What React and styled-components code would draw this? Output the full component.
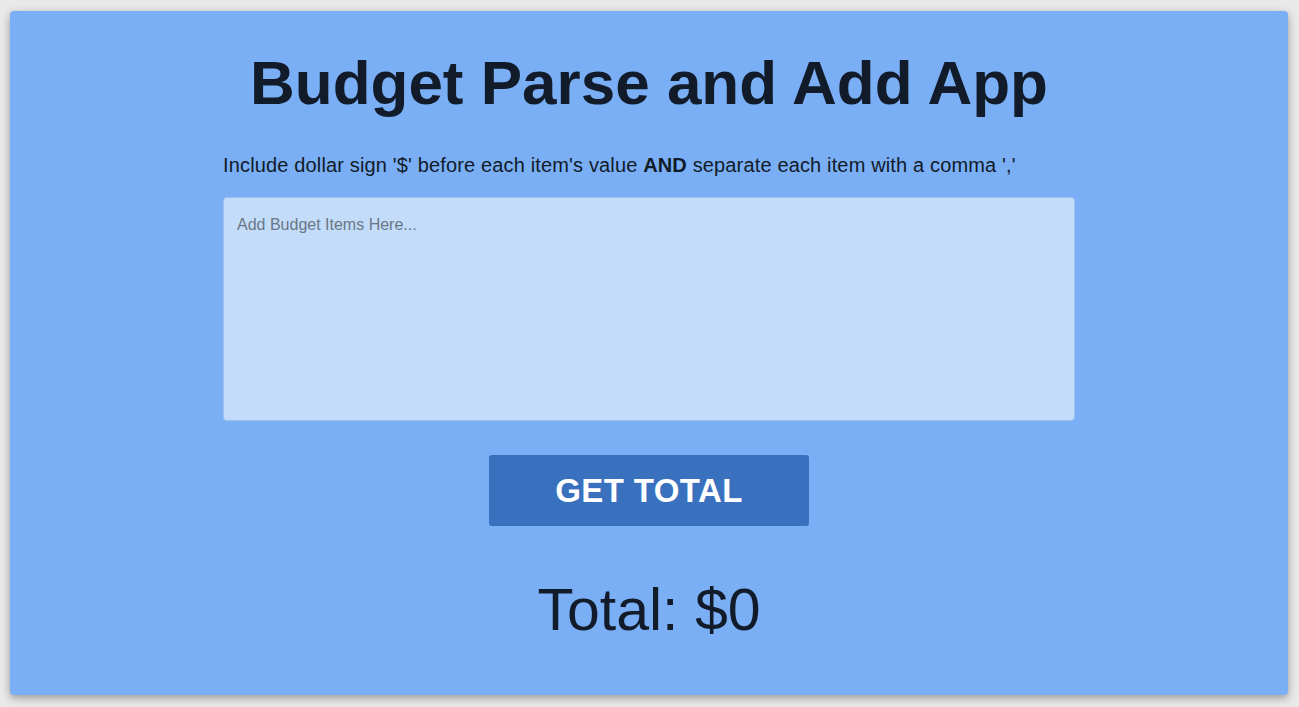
import React, { useState } from 'react'
import styled, { createGlobalStyle } from 'styled-components'

const GlobalStyle = createGlobalStyle`
  body {
    margin: 0;
    background: #e9e9e9;
    font-family: "Liberation Sans", Arial, sans-serif;
  }
`;

const Page = styled.div`
  padding: 11px 11px 12px 10px;
  min-height: 707px;
  box-sizing: border-box;
`;

const Card = styled.main`
  background-color: #7aaff5;
  border-radius: 4px;
  box-shadow: 0 3px 8px rgba(0, 0, 0, 0.35);
  height: 684px;
  box-sizing: border-box;
  display: flex;
  flex-direction: column;
  align-items: center;
  color: #111b29;
  padding-top: 41px;
`;

const Title = styled.h1`
  margin: 0;
  font-size: 62px;
  font-weight: 700;
  line-height: 1;
`;

const Content = styled.div`
  width: 852px;
  display: flex;
  flex-direction: column;
  align-items: center;
`;

const Hint = styled.p`
  align-self: stretch;
  margin: 39px 0 0;
  font-size: 20px;
  line-height: 24px;
  letter-spacing: 0.15px;
`;

const BudgetInput = styled.textarea`
  margin-top: 20px;
  width: 100%;
  height: 224px;
  box-sizing: border-box;
  resize: none;
  background: #c2dcfa;
  border: 1px solid #9fc3f0;
  border-radius: 4px;
  padding: 18px 13px;
  font-family: "Liberation Sans", Arial, sans-serif;
  font-size: 16px;
  color: #111b29;
  &::placeholder {
    color: #6b7785;
  }
  &:focus {
    outline: none;
  }
`;

const TotalButton = styled.button`
  margin-top: 34px;
  width: 320px;
  height: 71px;
  border: none;
  border-radius: 3px;
  background: #3a71bf;
  color: #fff;
  font-family: "Liberation Sans", Arial, sans-serif;
  font-size: 33px;
  font-weight: 700;
  letter-spacing: 0.4px;
  cursor: pointer;
`;

const Total = styled.h2`
  margin: 55px 0 0;
  font-size: 59px;
  font-weight: 400;
  line-height: 1;
`;

const App = () => {
  const [text, setText] = useState('');
  const [total, setTotal] = useState(0);

  const getTotal = () => {
    const sum = text
      .split(',')
      .map((item) => {
        const match = item.match(/\$\s*([\d.]+)/);
        return match ? parseFloat(match[1]) : 0;
      })
      .reduce((a, b) => a + b, 0);
    setTotal(sum);
  };

  return (
    <>
      <GlobalStyle />
      <Page>
        <Card>
          <Title>Budget Parse and Add App</Title>
          <Content>
            <Hint>
              Include dollar sign '$' before each item's value <b>AND</b> separate each item with a comma ','
            </Hint>
            <BudgetInput
              placeholder="Add Budget Items Here..."
              value={text}
              onChange={(e) => setText(e.target.value)}
            />
            <TotalButton onClick={getTotal}>GET TOTAL</TotalButton>
            <Total>Total: ${total}</Total>
          </Content>
        </Card>
      </Page>
    </>
  )
}

export default App
